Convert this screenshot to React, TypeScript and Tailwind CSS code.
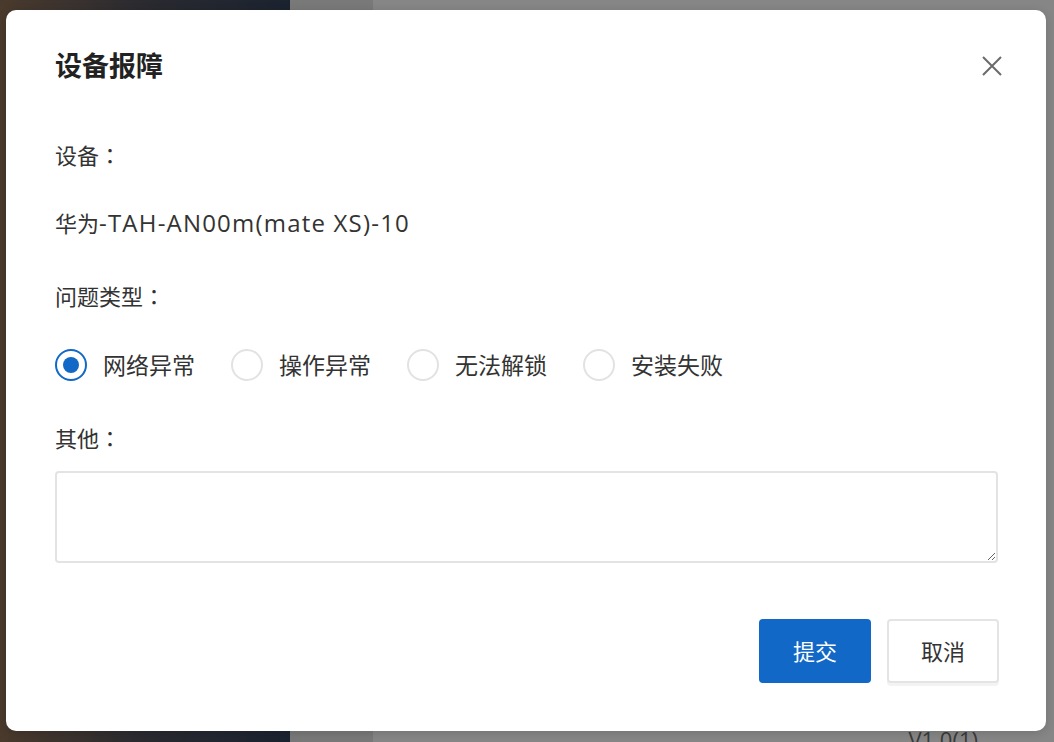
import { useState } from "react";

const problemTypes = ["网络异常", "操作异常", "无法解锁", "安装失败"];

function CloseIcon() {
  return (
    <svg width="22" height="22" viewBox="0 0 22 22" fill="none">
      <path d="M2 2 L20 20 M20 2 L2 20" stroke="#6b6b6b" strokeWidth="2" />
    </svg>
  );
}

// centred full-width colon, as the reference draws it
function Colon() {
  return <span style={{ fontFamily: '"Noto Sans CJK TC", sans-serif' }}>：</span>;
}

export default function App() {
  const [type, setType] = useState("网络异常");
  const [other, setOther] = useState("");

  return (
    <div
      className="relative w-[1054px] h-[742px] overflow-hidden flex text-[#333]"
      style={{ fontFamily: '"Open Sans", "Noto Sans CJK SC", sans-serif' }}
    >
      {/* page behind the overlay */}
      <div className="w-[290px] h-full bg-gradient-to-r from-[#4a3a2c] via-[#2a2a30] to-[#1b2330]" />
      <div className="w-[83px] h-full bg-[#797979]" />
      <div className="flex-1 h-full bg-[#868686] flex flex-col items-end pt-[186px] gap-[22px] text-[#3a3a3a] text-[24px]">
        <span className="translate-x-[14px]">0</span>
        <span className="translate-x-[14px]">0</span>
        <span className="mt-auto mr-[76px] translate-y-[14px] text-[22px]">V1.0(1)</span>
      </div>

      {/* modal */}
      <div className="absolute left-[6px] top-[10px] w-[1040px] h-[721px] bg-white rounded-[10px] shadow-[0_2px_10px_rgba(0,0,0,0.15)] px-[49px] flex flex-col">
        <div className="flex items-center justify-between mt-[37px]">
          <h2 className="text-[27px] font-bold leading-[38px] text-[#222]">设备报障</h2>
          <button className="mr-[-6px] p-0 cursor-pointer">
            <CloseIcon />
          </button>
        </div>

        <div className="text-[22px] leading-[32px] h-[32px] mt-[53px]">
          设备<Colon />
        </div>
        <div className="text-[22px] leading-[32px] h-[32px] mt-[37px] whitespace-nowrap">
          华为<span className="text-[24px] leading-[32px] tracking-[1.2px]">-TAH-AN00m(mate XS)-10</span>
        </div>

        <div className="text-[22px] leading-[32px] h-[32px] mt-[40px]">
          问题类型<Colon />
        </div>
        <div className="flex items-center gap-[34px] h-[32px] mt-[38px]">
          {problemTypes.map((t) => (
            <label
              key={t}
              className="flex items-center gap-[16px] cursor-pointer"
              onClick={() => setType(t)}
            >
              <span
                className={
                  type === t
                    ? "w-[32px] h-[32px] rounded-full border-2 border-[#1168c7] flex items-center justify-center"
                    : "w-[32px] h-[32px] rounded-full border-2 border-[#e2e2e2] flex items-center justify-center"
                }
              >
                {type === t && <span className="w-[16px] h-[16px] rounded-full bg-[#1168c7]" />}
              </span>
              <span className="text-[23px] leading-[32px] w-[94px]">{t}</span>
            </label>
          ))}
        </div>

        <div className="text-[22px] leading-[32px] h-[32px] mt-[40px]">
          其他<Colon />
        </div>
        <textarea
          value={other}
          onChange={(e) => setOther(e.target.value)}
          className="mt-[18px] w-[943px] h-[92px] border-2 border-[#e3e3e3] rounded-[4px] outline-none px-3 py-2 text-[20px] resize-y"
        />

        <div className="flex justify-end gap-[16px] mt-[56px] mr-[-2px]">
          <button className="w-[112px] h-[64px] rounded-[4px] bg-[#1168c7] text-white text-[22px]">
            提交
          </button>
          <button className="w-[112px] h-[64px] rounded-[4px] bg-white border-2 border-[#e4e4e4] shadow-[0_3px_0_#f3f3f3] text-[#333] text-[22px]">
            取消
          </button>
        </div>
      </div>
    </div>
  );
}
